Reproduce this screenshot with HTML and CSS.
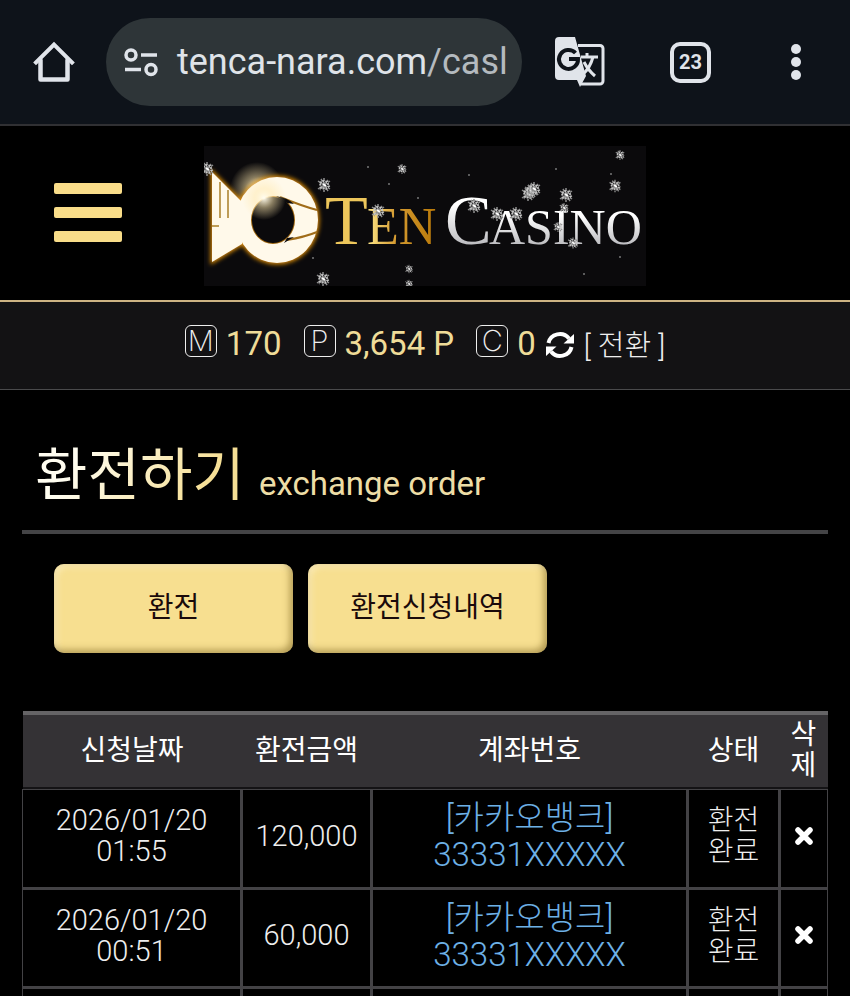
FILE: index.html
```
<!DOCTYPE html>
<html lang="ko">
<head>
    <meta charset="UTF-8">
    <meta name="viewport" content="width=device-width, initial-scale=1.0">
    <title>환전하기</title>
    <link rel="stylesheet" href="styles.css">
</head>
<body>

    <!-- Browser Bar -->
    <div class="browser-bar">
        <button class="icon-btn home" aria-label="Home">
            <svg width="44" height="44" viewBox="0 0 44 44" fill="none" stroke="#e0e4ea" stroke-width="4.5" stroke-linejoin="round" stroke-linecap="round">
                <path d="M4 22.500 L22 4.500 L40 22.500" stroke-linecap="square" stroke-linejoin="miter" stroke-width="4"/>
                <path d="M8.500 20 V39.500 H35.500 V20"/>
            </svg>
        </button>
        <div class="address">
            <svg width="34" height="30" viewBox="0 0 34 30" fill="none" stroke="#e0e4ea" stroke-width="3.500">
                <circle cx="7" cy="8" r="5"/>
                <path d="M17 8 H33 M1 22.500 H17"/>
                <circle cx="27" cy="22.500" r="5"/>
            </svg>
            <span class="url">tenca-nara.com<span class="path">/casl</span></span>
        </div>
        <button class="icon-btn translate" aria-label="Translate">
            <svg width="50" height="50" viewBox="0 0 50 50">
                <path d="M23 8.500 H45 a3 3 0 0 1 3 3 V44 a3 3 0 0 1 -3 3 H26" fill="none" stroke="#e0e4ea" stroke-width="3"/>
                <path d="M4 0 H20 L31 39 L25 50 L22 43 H4 a4 4 0 0 1 -4 -4 V4 a4 4 0 0 1 4 -4 Z" fill="#e0e4ea"/>
                <path d="M20.500 16 A9.500 9.500 0 1 0 23 22 H14" fill="none" stroke="#0e131a" stroke-width="4"/>
                <path d="M26 20 H43 M32 16 V20 M38 20 Q35 31 28 37 M29 25 Q33 33 40 39" fill="none" stroke="#e0e4ea" stroke-width="3"/>
            </svg>
        </button>
        <button class="tabs">23</button>
        <button class="icon-btn more" aria-label="Menu">
            <svg width="12" height="38" viewBox="0 0 12 38" fill="#e0e4ea">
                <circle cx="6" cy="6" r="5"/>
                <circle cx="6" cy="19" r="5"/>
                <circle cx="6" cy="32" r="5"/>
            </svg>
        </button>
    </div>

    <!-- Header Section -->
    <header>
        <button class="menu-btn" aria-label="메뉴">
            <span></span>
            <span></span>
            <span></span>
        </button>
        <a class="logo" href="#" aria-label="Ten Casino">
            <svg width="442" height="140" viewBox="0 0 442 140">
                <defs>
                    <linearGradient id="gold" x1="0" y1="0" x2="1" y2="0">
                        <stop offset="0" stop-color="#ffe889"/>
                        <stop offset="0.400" stop-color="#d69c32"/>
                        <stop offset="1" stop-color="#b87808"/>
                    </linearGradient>
                    <linearGradient id="silver" x1="0" y1="0" x2="0" y2="1">
                        <stop offset="0.300" stop-color="#ffffff"/>
                        <stop offset="1" stop-color="#a5a5aa"/>
                    </linearGradient>
                    <radialGradient id="flare">
                        <stop offset="0" stop-color="#fffdf2"/>
                        <stop offset="0.450" stop-color="#ffe9b0" stop-opacity="0.500"/>
                        <stop offset="1" stop-color="#ffe9b0" stop-opacity="0"/>
                    </radialGradient>
                    <filter id="glow" x="-20%" y="-20%" width="140%" height="140%">
                        <feGaussianBlur stdDeviation="2"/>
                    </filter>
                    <g id="fish">
                        <path d="M8 26 L38 56 V98 L8 116 Z"/>
                        <path fill-rule="evenodd" d="M73 31 A41 43 0 1 0 73 117 A41 43 0 1 0 73 31 Z M69 50 A22 24 0 1 1 69 98 A22 24 0 1 1 69 50 Z"/>
                    </g>
                    <g id="flake" fill="none">
                        <path d="M0 -7 V7 M-6 -4 L6 4 M-6 4 L6 -4 M-3 -6 L4 6 M4 -5 L-4 5" stroke="#8e8e8e" stroke-width="1.500" stroke-dasharray="3 1"/>
                        <path d="M-4 -2 L-1 -4 L3 -3 L5 1 L2 4 L-3 3 Z" stroke="#c4c4c4" stroke-width="2" stroke-dasharray="2 1"/>
                        <path d="M-1 -1 L2 1" stroke="#fff" stroke-width="2"/>
                    </g>
                </defs>
                <rect width="442" height="140" fill="#0b0a0c"/>
                <circle cx="53" cy="43" r="27" fill="url(#flare)"/>
                <use href="#fish" fill="#d88a08" stroke="#d88a08" stroke-width="3" filter="url(#glow)"/>
                <ellipse cx="69" cy="74" rx="21" ry="23" fill="#0b0a0c"/>
                <use href="#fish" fill="#fff9ea"/>
                <path d="M16 36 V72 M24 44 V72" stroke="#a97f28" stroke-width="1.500"/>
                <path d="M8 80 H15" stroke="#a97f28" stroke-width="1.500"/>
                <path d="M76 51 Q98 60 113 64 M83 94 Q101 91 113 86" fill="none" stroke="#a06c18" stroke-width="2"/>
                <path d="M72 50 Q84 52 90 58 L83 57 Z M83 92 L90 91 L80 97 Z" fill="#0b0a0c"/>
                <circle cx="60" cy="52" r="22" fill="url(#flare)"/>
                <g class="logo-text">
                    <text x="121" y="98" font-size="70" fill="#edc65b">T</text>
                    <text x="163" y="98" font-size="52" fill="url(#gold)">EN</text>
                    <text x="241" y="98" font-size="70" fill="url(#silver)">C</text>
                    <text x="285" y="98" font-size="50" fill="url(#silver)">ASINO</text>
                </g>
                <use href="#flake" x="3" y="23"/>
                <use href="#flake" x="120" y="39"/>
                <use href="#flake" x="119" y="133"/>
                <use href="#flake" x="174" y="65"/>
                <use href="#flake" transform="translate(198 23) scale(0.700)"/>
                <use href="#flake" transform="translate(205 123) scale(0.600)"/>
                <use href="#flake" transform="translate(205 138) scale(0.600)"/>
                <use href="#flake" x="270" y="60"/>
                <use href="#flake" x="293" y="68"/>
                <use href="#flake" x="312" y="68"/>
                <use href="#flake" x="324" y="48"/>
                <use href="#flake" x="327" y="45"/>
                <use href="#flake" x="330" y="43"/>
                <use href="#flake" x="362" y="49"/>
                <use href="#flake" transform="translate(360 62) scale(0.700)"/>
                <use href="#flake" transform="translate(354 81) scale(0.700)"/>
                <use href="#flake" transform="translate(369 97) scale(0.800)"/>
                <use href="#flake" transform="translate(411 40) scale(0.900)"/>
                <use href="#flake" transform="translate(416 9) scale(0.700)"/>
                <g fill="#777">
                    <circle cx="164" cy="21" r="1"/>
                    <circle cx="185" cy="38" r="1"/>
                    <circle cx="214" cy="52" r="1"/>
                    <circle cx="109" cy="112" r="1"/>
                    <circle cx="265" cy="29" r="1"/>
                    <circle cx="352" cy="23" r="1"/>
                    <circle cx="407" cy="28" r="1"/>
                    <circle cx="380" cy="128" r="1"/>
                    <circle cx="416" cy="111" r="1"/>
                </g>
            </svg>
        </a>
    </header>

    <!-- Balance Bar -->
    <div class="balance">
        <div class="balance-item"><span class="badge">M</span><span class="amount">170</span></div>
        <div class="balance-item"><span class="badge">P</span><span class="amount">3,654 P</span></div>
        <div class="balance-item">
            <span class="badge">C</span><span class="amount">0</span>
            <button class="icon-btn refresh" aria-label="새로고침">
                <svg width="30" height="28" viewBox="0 0 30 28">
                    <path d="M3.500 12 A11.500 11 0 0 1 24 7.500 M26.500 16 A11.500 11 0 0 1 6 20.500" fill="none" stroke="#fff" stroke-width="4"/>
                    <path d="M29 3 V12.500 H18.500 Z M1 25 V15.500 H11.500 Z" fill="#fff"/>
                </svg>
            </button>
            <a class="convert" href="#">[ 전환 ]</a>
        </div>
    </div>

    <!-- Exchange Section -->
    <main>
        <h1><span class="title">환전하기</span> <small>exchange order</small></h1>

        <div class="tab-menu">
            <button>환전</button>
            <button>환전신청내역</button>
        </div>

        <table class="history">
            <colgroup>
                <col class="col-date">
                <col class="col-amount">
                <col class="col-account">
                <col class="col-state">
                <col class="col-delete">
            </colgroup>
            <thead>
                <tr>
                    <th>신청날짜</th>
                    <th>환전금액</th>
                    <th>계좌번호</th>
                    <th>상태</th>
                    <th>삭제</th>
                </tr>
            </thead>
            <tbody>
                <tr>
                    <td class="number">2026/01/20 01:55</td>
                    <td class="number">120,000</td>
                    <td class="account">[카카오뱅크]<br>33331XXXXX</td>
                    <td>환전<br>완료</td>
                    <td>
                        <button class="icon-btn" aria-label="삭제">
                            <svg width="20" height="20" viewBox="0 0 20 20"><path d="M4 4 L16 16 M16 4 L4 16" stroke="#fff" stroke-width="5.500" stroke-linecap="round"/></svg>
                        </button>
                    </td>
                </tr>
                <tr>
                    <td class="number">2026/01/20 00:51</td>
                    <td class="number">60,000</td>
                    <td class="account">[카카오뱅크]<br>33331XXXXX</td>
                    <td>환전<br>완료</td>
                    <td>
                        <button class="icon-btn" aria-label="삭제">
                            <svg width="20" height="20" viewBox="0 0 20 20"><path d="M4 4 L16 16 M16 4 L4 16" stroke="#fff" stroke-width="5.500" stroke-linecap="round"/></svg>
                        </button>
                    </td>
                </tr>
                <tr>
                    <td></td>
                    <td></td>
                    <td></td>
                    <td></td>
                    <td></td>
                </tr>
            </tbody>
        </table>
    </main>

</body>
</html>
```
FILE: styles.css
```
* {
    box-sizing: border-box;
}

body {
    font-family: Roboto, "Noto Sans CJK KR", sans-serif;
    font-weight: 300;
    background-color: #000;
    color: #eee;
    margin: 0;
    height: 100vh;
    overflow: hidden;
}

button {
    font-family: inherit;
    cursor: pointer;
}

svg {
    display: block;
    flex-shrink: 0;
}

.icon-btn {
    background: none;
    border: none;
    padding: 0;
}

/* Browser bar */
.browser-bar {
    display: flex;
    align-items: center;
    height: 126px;
    padding: 0 48px 0 32px;
    background-color: #0e131a;
    border-bottom: 2px solid #303033;
}

.address {
    display: flex;
    flex: 1;
    align-items: center;
    gap: 19px;
    height: 88px;
    margin: 0 33px 0 30px;
    padding: 0 12px 0 18px;
    border-radius: 44px;
    background-color: #2e3538;
    overflow: hidden;
}

.url {
    font-size: 36px;
    font-weight: 400;
    line-height: 44px;
    color: #dfe3e8;
    white-space: nowrap;
}

.url .path {
    color: #b4babf;
}

.tabs {
    width: 41px;
    height: 41px;
    margin: 0 79px 0 65px;
    padding: 0;
    border: 4px solid #e0e4ea;
    border-radius: 10px;
    background: none;
    color: #e0e4ea;
    font-size: 20px;
    font-weight: 700;
}

/* Header */
header {
    display: grid;
    grid-template-columns: 1fr auto 1fr;
    align-items: center;
    height: 176px;
    padding: 6px 54px 0;
    border-bottom: 2px solid #cdb383;
}

.menu-btn {
    display: flex;
    flex-direction: column;
    gap: 13px;
    width: 68px;
    margin-bottom: 8px;
    padding: 0;
    border: none;
    background: none;
}

.menu-btn span {
    width: 100%;
    height: 11px;
    border-radius: 2px;
    background-color: #f9dd89;
}

.logo-text {
    font-family: "Liberation Serif", serif;
}

/* Balance bar */
.balance {
    display: flex;
    justify-content: center;
    gap: 22px;
    height: 88px;
    padding-top: 19px;
    background-color: #131214;
    border-bottom: 1px solid #4a4a4c;
}

.balance-item {
    display: flex;
    align-items: center;
    gap: 9px;
    height: 44px;
}

.badge {
    width: 32px;
    height: 32px;
    margin-bottom: 5px;
    border: 1px solid #eee;
    border-radius: 6px;
    font-family: Inter, sans-serif;
    font-size: 29px;
    font-weight: 200;
    line-height: 30px;
    text-align: center;
}

.amount {
    font-size: 33px;
    font-weight: 400;
    color: #efdc98;
}

.refresh {
    margin-top: 4px;
}

.convert {
    color: #eee;
    font-size: 29px;
    text-decoration: none;
}

/* Exchange */
main {
    padding: 42px 22px 0;
}

h1 {
    margin: 0 0 30px;
    padding: 0 13px;
    height: 102px;
    border-bottom: 4px solid #444446;
    font-size: 57px;
    font-weight: 400;
    line-height: 88px;
}

h1 .title {
    background: linear-gradient(120deg, #fffdf0 20%, #f6df95 80%);
    -webkit-background-clip: text;
    background-clip: text;
    color: transparent;
}

h1 small {
    color: #eddda6;
    font-size: 33px;
    font-weight: 400;
}

.tab-menu {
    display: flex;
    gap: 15px;
    margin-bottom: 58px;
    padding: 0 32px;
}

.tab-menu button {
    width: 239px;
    height: 89px;
    padding: 0 0 8px;
    border: none;
    border-radius: 10px;
    background-color: #f7df90;
    box-shadow: inset -3px -3px 7px rgba(110, 85, 20, 0.5), inset 3px 3px 6px rgba(255, 245, 210, 0.6);
    color: #1a0a0a;
    font-size: 28px;
    font-weight: 400;
}

.history {
    width: 100%;
    table-layout: fixed;
    border-collapse: collapse;
    font-size: 28px;
    line-height: 31px;
    text-align: center;
}

.col-amount {
    width: 130px;
}

.col-account {
    width: 316px;
}

.col-state {
    width: 92px;
}

.col-delete {
    width: 48px;
}

.history th {
    height: 76px;
    padding: 0 8px 3px;
    border-top: 4px solid #656466;
    border-bottom: 1px solid #434245;
    background-color: #343235;
    box-shadow: inset 0 -2px #141315;
    color: #fff;
    font-weight: 400;
    word-break: break-all;
}

.history td {
    height: 99px;
    padding: 0 8px 4px;
    border: 3px solid #434245;
}

.history tbody tr:first-child td {
    border-top-width: 1px;
}

.history td:first-child {
    border-left-width: 1px;
}

.history td:last-child {
    border-right-width: 1px;
}

.history .number {
    font-size: 29px;
}

.history .account {
    color: #6db0e6;
    font-size: 33px;
    line-height: 37px;
}
```
